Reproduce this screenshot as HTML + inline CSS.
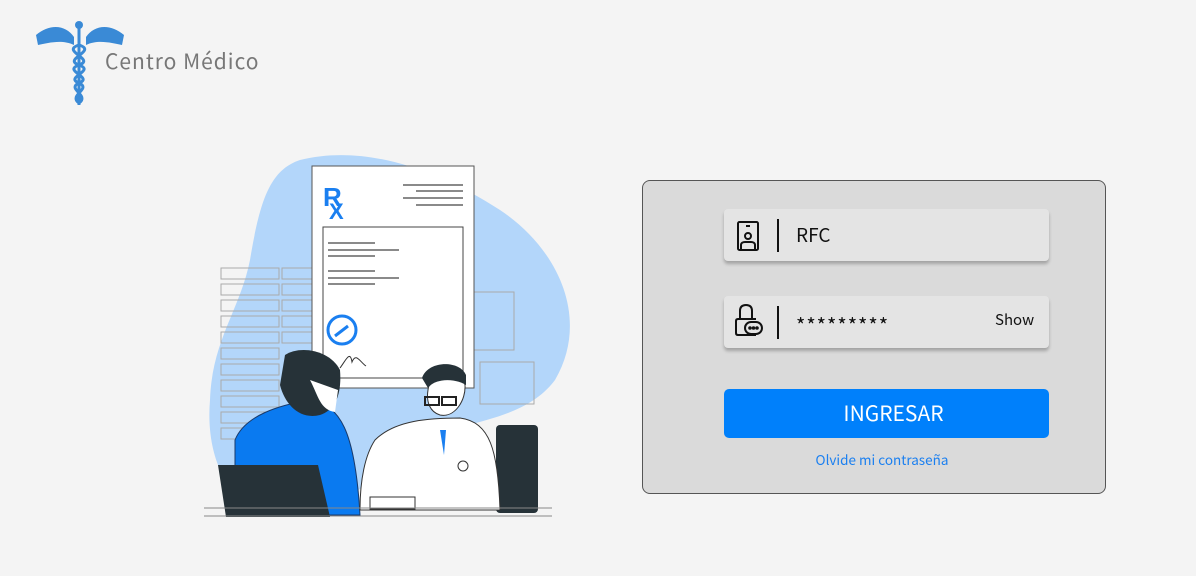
<!DOCTYPE html>
<html><head><meta charset="utf-8"><style>
*{margin:0;padding:0;box-sizing:border-box}
body{width:1196px;height:576px;background:#f4f4f4;font-family:"Noto Sans CJK JP","DejaVu Sans",sans-serif;position:relative;overflow:hidden}
.logo-t{position:absolute;left:105px;top:46px;font-size:21px;color:#777;letter-spacing:1px;font-weight:400}
.panel{position:absolute;left:642px;top:180px;width:464px;height:314px;background:#dadada;border:1.5px solid #555;border-radius:8px}
.field{position:absolute;left:81px;width:325px;height:52px;background:#e4e4e4;border-radius:4px;box-shadow:0 3px 3px rgba(0,0,0,.25)}
.sep{position:absolute;left:53px;top:10px;width:1.5px;height:33px;background:#111}
.ftext{position:absolute;left:72px;font-size:19px;color:#111}
.btn{position:absolute;left:81px;top:208px;width:325px;height:49px;background:#0080fb;border-radius:5px;color:#fff;font-size:21px;text-align:center;line-height:49px;padding-left:14px}
.forgot{position:absolute;left:8px;width:100%;top:268px;text-align:center;color:#1a7ff0;font-size:13.5px}
</style></head><body>
<svg style="position:absolute;left:30px;top:15px" width="100" height="95" viewBox="0 0 100 95">
<g fill="#3a8ad6">
<path d="M6 20 C20 8 36 10 44 22 L44 30 C32 24 18 28 8 30 Z"/>
<path d="M94 20 C80 8 64 10 56 22 L56 30 C68 24 82 28 92 30 Z"/>
<circle cx="49" cy="10" r="4"/>
</g>
<rect x="47.5" y="12" width="3" height="78" fill="#3a8ad6"/>
<path d="M49 30 C30 36 66 44 49 50 C32 56 64 62 49 68 C36 74 60 80 49 88" stroke="#3a8ad6" stroke-width="3" fill="none"/>
<path d="M49 30 C68 36 32 44 49 50 C66 56 34 62 49 68 C62 74 38 80 49 88" stroke="#3a8ad6" stroke-width="3" fill="none"/>
</svg>
<div class="logo-t">Centro Médico</div>

<svg style="position:absolute;left:0;top:0" width="600" height="576">
<path d="M300 160 C360 145 430 165 500 210 C560 250 590 320 555 380 C525 420 470 420 420 440 C380 470 340 520 280 515 C230 510 205 460 210 400 C212 340 240 310 250 260 C260 200 270 170 300 160 Z" fill="#b3d6fa"/>
<g stroke="#aaa" fill="none" stroke-width="1">
<rect x="221" y="268" width="58" height="11"/><rect x="221" y="284" width="58" height="11"/><rect x="221" y="300" width="58" height="11"/><rect x="221" y="316" width="58" height="11"/><rect x="221" y="332" width="58" height="11"/><rect x="221" y="348" width="58" height="11"/><rect x="221" y="364" width="58" height="11"/><rect x="221" y="380" width="58" height="11"/><rect x="221" y="396" width="58" height="11"/><rect x="221" y="412" width="58" height="11"/><rect x="221" y="428" width="58" height="11"/>
<rect x="282" y="268" width="30" height="11"/><rect x="282" y="284" width="30" height="11"/><rect x="282" y="300" width="30" height="11"/><rect x="282" y="316" width="30" height="11"/><rect x="282" y="332" width="30" height="11"/>
<rect x="472" y="292" width="42" height="58"/><rect x="480" y="362" width="54" height="42"/>
</g>
<rect x="312" y="166" width="162" height="222" fill="#fff" stroke="#555"/>
<rect x="323" y="227" width="140" height="151" fill="#fff" stroke="#444"/>
<text x="323" y="206" font-family="Liberation Sans" font-size="26" fill="#1a7ff0" font-weight="bold">R</text>
<text x="329" y="219" font-family="Liberation Sans" font-size="22" fill="#1a7ff0" font-weight="bold">X</text>
<g stroke="#444" stroke-width="1.2">
<line x1="403" y1="185" x2="463" y2="185"/><line x1="403" y1="198" x2="463" y2="198"/><line x1="416" y1="205" x2="463" y2="205"/><line x1="416" y1="191" x2="463" y2="191"/>
<line x1="328" y1="243" x2="375" y2="243"/><line x1="328" y1="250" x2="399" y2="250"/><line x1="328" y1="256" x2="375" y2="256"/>
<line x1="328" y1="271" x2="375" y2="271"/><line x1="328" y1="278" x2="399" y2="278"/><line x1="328" y1="284" x2="375" y2="284"/>
</g>
<circle cx="342" cy="330" r="14" fill="none" stroke="#1a7ff0" stroke-width="3"/>
<line x1="335" y1="336" x2="348" y2="326" stroke="#1a7ff0" stroke-width="3"/>
<path d="M340 368 C346 360 350 350 352 362 C356 352 360 362 366 366" stroke="#333" fill="none"/>
<rect x="496" y="425" width="42" height="88" rx="4" fill="#263238"/>
<path d="M235 440 C245 415 280 405 310 400 C340 405 355 430 360 515 L235 515 Z" fill="#0a7af0" stroke="#1a3a6a"/>
<path d="M285 355 C300 345 330 350 340 370 C342 395 335 410 320 415 C300 420 285 405 280 385 Z" fill="#263238"/>
<path d="M310 380 C318 395 320 410 335 412 L338 390 Z" fill="#fff"/>
<path d="M218 465 L318 465 L330 517 L226 517 Z" fill="#263238"/>
<path d="M375 440 C395 420 430 418 460 418 C490 422 498 450 500 510 L360 510 C360 480 365 455 375 440 Z" fill="#fff" stroke="#333"/>
<path d="M428 390 C430 370 460 365 465 385 C466 400 455 418 440 415 C430 412 426 402 428 390 Z" fill="#fff" stroke="#333"/>
<path d="M422 378 C428 360 460 360 466 375 L466 385 C455 378 435 378 428 388 Z" fill="#263238"/>
<rect x="425" y="397" width="14" height="8" fill="none" stroke="#222" stroke-width="2"/><rect x="442" y="397" width="14" height="8" fill="none" stroke="#222" stroke-width="2"/>
<path d="M440 430 L446 430 L444 455 Z" fill="#1a7ff0"/>
<circle cx="463" cy="466" r="5" fill="#fff" stroke="#333"/>
<rect x="370" y="497" width="45" height="12" fill="#fff" stroke="#333"/>
<line x1="204" y1="508" x2="552" y2="508" stroke="#888"/>
<line x1="204" y1="516" x2="552" y2="516" stroke="#888"/>
</svg>

<div class="panel">
 <div class="field" style="top:28px">
  <svg style="position:absolute;left:12px;top:12px" width="24" height="30" viewBox="0 0 24 30" fill="none" stroke="#111" stroke-width="2"><rect x="2" y="1" width="20" height="28" rx="1.5"/><line x1="10" y1="5" x2="14" y2="5"/><circle cx="12" cy="15" r="3"/><path d="M5 28 V24 C5 22 7 21 9 21 H15 C17 21 19 22 19 24 V28"/></svg>
  <div class="sep"></div>
  <div class="ftext" style="top:12px">RFC</div>
 </div>
 <div class="field" style="top:115px">
  <svg style="position:absolute;left:10px;top:7px" width="30" height="34" viewBox="0 0 30 34" fill="none" stroke="#111" stroke-width="2"><path d="M6 16 V8 C6 4 8 2 12 2 C16 2 18 4 18 8 V16"/><path d="M22 16 H4 C2.5 16 2 17 2 18 V30 C2 31 2.5 32 4 32 H22"/><rect x="11" y="19" width="17" height="12" rx="6"/><circle cx="16" cy="25" r="0.8" fill="#111"/><circle cx="19.5" cy="25" r="0.8" fill="#111"/><circle cx="23" cy="25" r="0.8" fill="#111"/></svg>
  <div class="sep"></div>
  <div class="ftext" style="top:14px;font-size:20px;letter-spacing:1px">*********</div>
  <div style="position:absolute;left:271px;top:13px;font-size:15px;color:#111">Show</div>
 </div>
 <div class="btn">INGRESAR</div>
 <div class="forgot">Olvide mi contraseña</div>
</div>
</body></html>
